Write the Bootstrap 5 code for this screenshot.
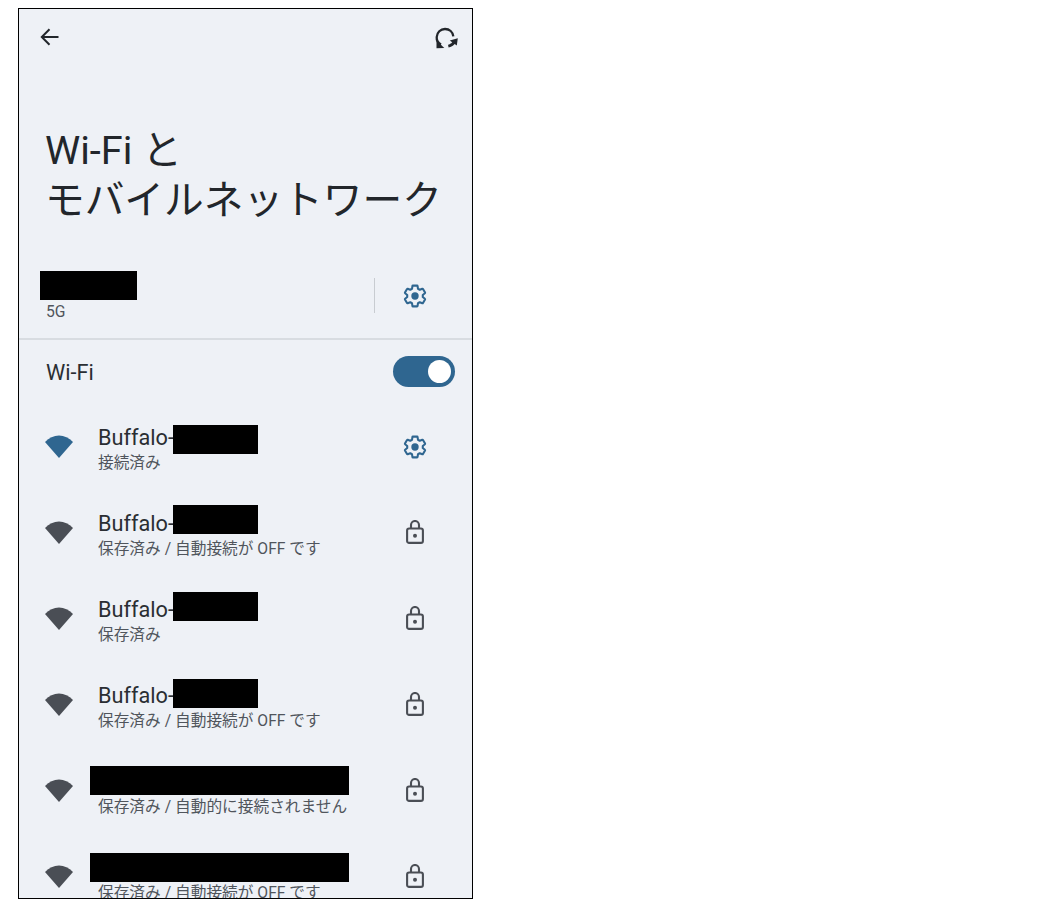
<!DOCTYPE html>
<html lang="ja">
<head>
<meta charset="utf-8">
<title>Wi-Fi とモバイルネットワーク</title>
<link href="https://cdn.jsdelivr.net/npm/bootstrap@5.3.0/dist/css/bootstrap.min.css" rel="stylesheet">
<style>
body { margin: 0; background: #fff; font-family: Roboto, "Noto Sans CJK JP", sans-serif; color: #22262b; }
.phone { margin: 8px 0 0 18px; width: 455px; height: 891px; border: 1px solid #000; background: #eef1f6; overflow: hidden; }
.topbar { height: 56px; padding: 0 14px 0 20px; }
.page-title { margin: 61px 0 0 26px; font-size: 39.7px; line-height: 50px; font-weight: 400; white-space: nowrap; color: #22262b; }
.mobile-row { height: 114px; position: relative; border-bottom: 2px solid #d8dce1; padding: 0 44px 0 27px; }
.mobile-sub { position: absolute; left: 27px; top: 76px; }
.vline { width: 1px; height: 35px; background: #c8ccd1; margin-right: 27px; margin-top: 52px; }
.gear-top { margin-top: 57px; }
.sub-text { font-size: 15.7px; line-height: 20px; color: #50555c; white-space: nowrap; }
.name-text { font-size: 21.7px; line-height: 27px; color: #2a2e33; white-space: nowrap; }
.wifi-row { height: 64px; padding: 0 17px 0 27px; }
.toggle-track { width: 62px; height: 31px; margin-top: -2px; border-radius: 16px; background: #2f6690; position: relative; }
.toggle-knob { position: absolute; right: 4px; top: 4px; width: 23px; height: 23px; border-radius: 50%; background: #fff; }
.net-row { height: 86px; position: relative; padding: 0 44px 0 26px; }
.net-text { margin-left: 25px; padding-top: 3px; }
.net-text .sub-text { margin-top: 2px; }
.icon-lift { margin-top: -2px; }
.cover { position: absolute; height: 29px; background: #000; }
.cover-short { left: 154px; width: 85px; }
.cover-long { left: 71px; width: 259px; }
.net-row:nth-child(1) .cover { top: 21px; }
.net-row:nth-child(2) .cover { top: 15px; }
.net-row:nth-child(3) .cover { top: 16px; }
.net-row:nth-child(4) .cover { top: 17px; }
.net-row:nth-child(5) .cover { top: 18px; }
.net-row:nth-child(6) .cover { top: 19px; }
.cover-top { left: 21px; top: 45px; width: 97px; }
.tint-blue { color: #2f6690; }
.tint-grey { color: #4a4e55; }
</style>
</head>
<body>
<svg width="0" height="0" class="d-block">
  <defs>
    <symbol id="gear" viewBox="0 0 24 24"><path fill="none" stroke="currentColor" stroke-width="1.9" stroke-linejoin="round" d="M19.14 12.94c.04-.3.06-.61.06-.94 0-.32-.02-.64-.07-.94l2.03-1.58a.49.49 0 0 0 .12-.61l-1.92-3.32a.488.488 0 0 0-.59-.22l-2.39.96c-.5-.38-1.03-.7-1.62-.94l-.36-2.54a.484.484 0 0 0-.48-.41h-3.84c-.24 0-.43.17-.47.41l-.36 2.54c-.59.24-1.13.57-1.62.94l-2.39-.96c-.22-.08-.47 0-.59.22L2.74 8.87c-.12.21-.08.47.12.61l2.03 1.58c-.05.3-.09.63-.09.94s.02.64.07.94l-2.03 1.58a.49.49 0 0 0-.12.61l1.92 3.32c.12.22.37.29.59.22l2.39-.96c.5.38 1.03.7 1.62.94l.36 2.54c.05.24.24.41.48.41h3.84c.24 0 .44-.17.47-.41l.36-2.54c.59-.24 1.13-.56 1.62-.94l2.39.96c.22.08.47 0 .59-.22l1.92-3.32c.12-.22.07-.47-.12-.61l-2.01-1.58z"/><circle cx="12" cy="12" r="3.4" fill="currentColor"/></symbol>
    <symbol id="lock" viewBox="0 0 18 24"><rect x="1.100" y="8.500" width="15.800" height="14.400" rx="2" fill="none" stroke="currentColor" stroke-width="2.100"/><path d="M5 8.500V5a4 4 0 0 1 8 0v3.500" fill="none" stroke="currentColor" stroke-width="2.100"/><circle cx="9" cy="15.700" r="2" fill="currentColor"/></symbol>
    <symbol id="wedge" viewBox="0 0 28 23"><path fill="currentColor" d="M0 7C4 2.800 8.800.5 14 .5S24 2.800 28 7L14 23z"/></symbol>
  </defs>
</svg>
<div class="phone">
  <div class="topbar d-flex align-items-center justify-content-between">
    <svg width="22" height="22" viewBox="0 0 22 22" aria-label="戻る"><path d="M19.500 11H3M10.500 3.200 2.800 11l7.700 7.800" fill="none" stroke="#22262b" stroke-width="2"/></svg>
    <svg width="24" height="24" viewBox="0 0 24 24" aria-label="更新"><path d="M7 19.500C3.800 17.800 2.500 15 2.700 12 3 7.300 6.500 4 11 4 15.500 4 18.800 7 19.300 11.300" fill="none" stroke="#22262b" stroke-width="2.300"/><path d="M2.500 15.500 10.300 23 2.500 23.300z" fill="#22262b"/><path d="M23.800 13.300 15.800 15.600 18.200 17.200C17 18.600 15.700 19.300 14 19.700L14.600 22.600C17 22.100 19.200 20.900 20.700 19.100L22.800 20.600z" fill="#22262b"/></svg>
  </div>
  <h1 class="page-title">Wi-Fi と<br>モバイルネットワーク</h1>
  <div class="mobile-row d-flex justify-content-end align-items-start">
    <div class="cover cover-top"></div>
    <div class="sub-text mobile-sub">5G</div>
    <div class="vline"></div>
    <svg class="gear-top tint-blue" width="26" height="26"><use href="#gear"/></svg>
  </div>
  <div class="wifi-row d-flex align-items-center justify-content-between">
    <span class="name-text">Wi-Fi</span>
    <span class="toggle-track"><span class="toggle-knob"></span></span>
  </div>
  <div class="net-list">
    <div class="net-row d-flex align-items-center">
      <svg class="tint-blue flex-shrink-0 icon-lift" width="28" height="23"><use href="#wedge"/></svg>
      <div class="net-text flex-grow-1"><div class="name-text">Buffalo-</div><div class="sub-text">接続済み</div></div>
      <div class="cover cover-short"></div>
      <svg class="tint-blue flex-shrink-0" width="26" height="26"><use href="#gear"/></svg>
    </div>
    <div class="net-row d-flex align-items-center">
      <svg class="tint-grey flex-shrink-0 icon-lift" width="28" height="23"><use href="#wedge"/></svg>
      <div class="net-text flex-grow-1"><div class="name-text">Buffalo-</div><div class="sub-text">保存済み / 自動接続が OFF です</div></div>
      <div class="cover cover-short"></div>
      <svg class="tint-grey flex-shrink-0 mx-1 icon-lift" width="18" height="24"><use href="#lock"/></svg>
    </div>
    <div class="net-row d-flex align-items-center">
      <svg class="tint-grey flex-shrink-0 icon-lift" width="28" height="23"><use href="#wedge"/></svg>
      <div class="net-text flex-grow-1"><div class="name-text">Buffalo-</div><div class="sub-text">保存済み</div></div>
      <div class="cover cover-short"></div>
      <svg class="tint-grey flex-shrink-0 mx-1 icon-lift" width="18" height="24"><use href="#lock"/></svg>
    </div>
    <div class="net-row d-flex align-items-center">
      <svg class="tint-grey flex-shrink-0 icon-lift" width="28" height="23"><use href="#wedge"/></svg>
      <div class="net-text flex-grow-1"><div class="name-text">Buffalo-</div><div class="sub-text">保存済み / 自動接続が OFF です</div></div>
      <div class="cover cover-short"></div>
      <svg class="tint-grey flex-shrink-0 mx-1 icon-lift" width="18" height="24"><use href="#lock"/></svg>
    </div>
    <div class="net-row d-flex align-items-center">
      <svg class="tint-grey flex-shrink-0 icon-lift" width="28" height="23"><use href="#wedge"/></svg>
      <div class="net-text flex-grow-1"><div class="name-text">&nbsp;</div><div class="sub-text">保存済み / 自動的に接続されません</div></div>
      <div class="cover cover-long"></div>
      <svg class="tint-grey flex-shrink-0 mx-1 icon-lift" width="18" height="24"><use href="#lock"/></svg>
    </div>
    <div class="net-row d-flex align-items-center">
      <svg class="tint-grey flex-shrink-0 icon-lift" width="28" height="23"><use href="#wedge"/></svg>
      <div class="net-text flex-grow-1"><div class="name-text">&nbsp;</div><div class="sub-text">保存済み / 自動接続が OFF です</div></div>
      <div class="cover cover-long"></div>
      <svg class="tint-grey flex-shrink-0 mx-1 icon-lift" width="18" height="24"><use href="#lock"/></svg>
    </div>
  </div>
</div>
<script src="https://cdn.jsdelivr.net/npm/bootstrap@5.3.0/dist/js/bootstrap.bundle.min.js"></script>
</body>
</html>
